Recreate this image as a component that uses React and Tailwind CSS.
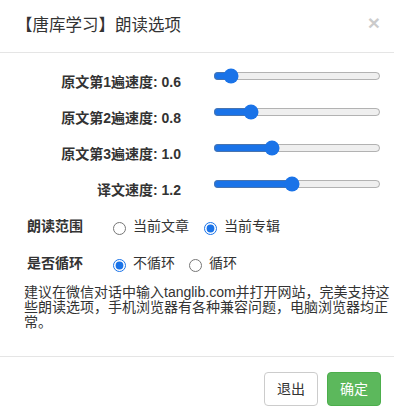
import React from "react";

const FONT = { fontFamily: '"Liberation Sans", "Noto Sans CJK SC", sans-serif' };

function SliderRow({ label, value }) {
  return (
    <div className="flex items-start h-[36px]">
      <div className="w-[181px] text-right pt-[10px] text-[14px] leading-[20px] font-bold text-[#333]">
        {label}
      </div>
      <input
        type="range"
        min="0.5"
        max="2"
        step="0.1"
        defaultValue={value}
        className="ml-[32px] mt-[6px] m-0 w-[168px] h-[16px] accent-[#1a73e8]"
      />
    </div>
  );
}

function Radio({ checked, name, text }) {
  return (
    <label className="flex items-start">
      <input type="radio" name={name} defaultChecked={checked} className="m-0 mt-[6px] w-[13px] h-[13px] accent-[#1a73e8]" />
      <span className="ml-[7px] text-[14px] leading-[20px] text-[#333]">{text}</span>
    </label>
  );
}

export default function App() {
  return (
    <div className="w-[394px] h-[419px] bg-white text-[#333] overflow-hidden" style={FONT}>
      <div className="h-[53px] border-b border-[#e5e5e5] flex items-start justify-between pl-[16px] pr-[14px]">
        <h4 className="text-[16.5px] leading-[26px] mt-[12px] font-normal text-[#333]">【唐库学习】朗读选项</h4>
        <button className="text-[21px] font-bold leading-[21px] mt-[12px] text-black opacity-20">×</button>
      </div>
      <div className="h-[303px] pt-[9px]">
        <SliderRow label="原文第1遍速度: 0.6" value={0.6} />
        <SliderRow label="原文第2遍速度: 0.8" value={0.8} />
        <SliderRow label="原文第3遍速度: 1.0" value={1.0} />
        <SliderRow label="译文速度: 1.2" value={1.2} />
        <div className="flex items-start mt-[10px] pl-[27px] h-[37px]">
          <div className="w-[86px] text-[14px] leading-[20px] font-bold">朗读范围</div>
          <div className="flex items-start gap-[15px]">
            <Radio name="range" text="当前文章" />
            <Radio name="range" text="当前专辑" checked />
          </div>
        </div>
        <div className="flex items-start pl-[27px] h-[20px]">
          <div className="w-[86px] text-[14px] leading-[20px] font-bold">是否循环</div>
          <div className="flex items-start gap-[14px]">
            <Radio name="loop" text="不循环" checked />
            <Radio name="loop" text="循环" />
          </div>
        </div>
        <p className="mt-[12px] pl-[24px] w-[390px] text-[14px] leading-[15px] text-[#333]">
          建议在微信对话中输入tanglib.com并打开网站，完美支持这些朗读选项，手机浏览器有各种兼容问题，电脑浏览器均正常。
        </p>
      </div>
      <div className="border-t border-[#e5e5e5] pt-[15px] pr-[13px] flex justify-end gap-[9px]">
        <button className="w-[54px] h-[34px] rounded-[4px] border border-[#ccc] bg-white text-[14px] text-[#333]">退出</button>
        <button className="w-[54px] h-[34px] rounded-[4px] border border-[#4cae4c] bg-[#5cb85c] text-[14px] text-white">确定</button>
      </div>
    </div>
  );
}
